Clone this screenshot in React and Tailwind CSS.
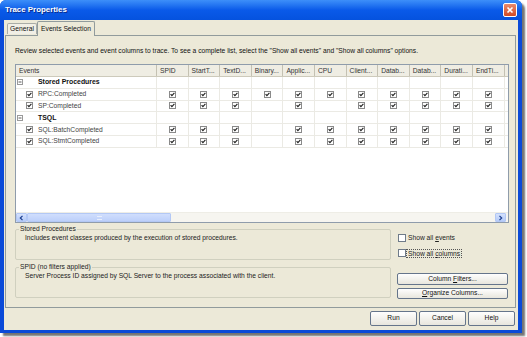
import React from 'react';

const COLS = ['SPID', 'StartT...', 'TextD...', 'Binary...', 'Applic...', 'CPU', 'Client...', 'Datab...', 'Datab...', 'Durati...', 'EndTi...'];

const ROWS = [
  { cat: true, label: 'Stored Procedures' },
  { label: 'RPC:Completed', c: [1, 1, 1, 1, 1, 1, 1, 1, 1, 1, 1] },
  { label: 'SP:Completed', c: [1, 1, 1, 0, 1, 0, 1, 1, 1, 1, 1] },
  { cat: true, label: 'TSQL' },
  { label: 'SQL:BatchCompleted', c: [1, 1, 1, 0, 1, 1, 1, 1, 1, 1, 1] },
  { label: 'SQL:StmtCompleted', c: [1, 1, 1, 0, 1, 1, 1, 1, 1, 1, 1] },
];

function Tick() {
  return (
    <svg width="7" height="7" viewBox="0 0 7 7">
      <rect x="0.5" y="0.5" width="6" height="6" fill="#fff" stroke="#8a8a8a" />
      <path d="M1.6 3.2 L2.9 4.7 L5.4 1.8" stroke="#222" strokeWidth="1.1" fill="none" />
    </svg>
  );
}

function Minus() {
  return (
    <svg width="6" height="6" viewBox="0 0 6 6">
      <rect x="0.5" y="0.5" width="5" height="5" fill="#fff" stroke="#9a9a9a" />
      <path d="M1.5 3 H4.5" stroke="#333" strokeWidth="0.8" />
    </svg>
  );
}

function Box() {
  return <div className="w-[8px] h-[8px] border border-[#6f7b89] bg-white shrink-0" />;
}

function Btn({ children, className }) {
  return (
    <div className={`flex items-center justify-center rounded-[2px] border border-[#65758b] bg-gradient-to-b from-[#fefefe] to-[#e8e6dd] text-[6.7px] text-[#111] ${className}`}>
      <span>{children}</span>
    </div>
  );
}

function Chevron({ dir }) {
  return (
    <svg width="5" height="6" viewBox="0 0 5 6">
      <path d={dir === 'l' ? 'M3.5 0.8 L1.3 3 L3.5 5.2' : 'M1.5 0.8 L3.7 3 L1.5 5.2'} stroke="#1d3f8f" strokeWidth="1.2" fill="none" />
    </svg>
  );
}

export default function App() {
  const gridCols = 'grid grid-cols-[141px_repeat(11,31.6px)_1fr]';
  return (
    <div className="w-[527px] h-[337px] bg-white font-['Liberation_Sans',Arial,sans-serif] text-[#111]">
      <div className="w-[522px] h-[333px] flex flex-col rounded-t-[6px] overflow-hidden bg-[#0a4ad8] shadow-[3px_3px_2px_rgba(0,0,0,0.55)]">
        {/* Title bar */}
        <div className="h-[20px] shrink-0 flex items-center justify-between pl-[5px] pr-[5px] bg-gradient-to-b from-[#3d8ff9] via-[#0a5ae9] to-[#0552de]">
          <span className="text-white font-bold text-[7.9px] [text-shadow:1px_1px_0_#0a2a8a]">Trace Properties</span>
          <div className="w-[14px] h-[14px] rounded-[2px] border border-white bg-gradient-to-b from-[#e98a6c] to-[#d24a22] flex items-center justify-center">
            <svg width="8" height="8" viewBox="0 0 8 8">
              <path d="M1.5 1.5 L6.5 6.5 M6.5 1.5 L1.5 6.5" stroke="#fff" strokeWidth="1.6" />
            </svg>
          </div>
        </div>

        {/* Body */}
        <div className="flex-1 mx-[4px] mb-[3px] bg-[#ece9d8] flex flex-col">
          {/* Tabs */}
          <div className="h-[15px] shrink-0 flex items-end pl-[3px] relative z-10">
            <div className="h-[11px] w-[30px] border border-b-0 border-[#a9aca6] rounded-t-[2px] bg-[#f1efe6] flex items-center justify-center text-[6.7px] mb-[1px]">
              General
            </div>
            <div className="h-[15px] w-[58px] border border-b-0 border-[#919b9c] rounded-t-[2px] bg-[#ece9d8] flex items-center justify-center text-[6.7px] -mb-[1px] whitespace-nowrap">
              Events Selection
            </div>
          </div>

          {/* Panel */}
          <div className="h-[273px] shrink-0 ml-[1px] mr-[2px] border border-[#919b9c] flex flex-col pl-[9px] pr-[6px]">
            <div className="mt-[11px] h-[8px] leading-[8px] text-[6.7px] whitespace-nowrap">
              Review selected events and event columns to trace. To see a complete list, select the "Show all events" and "Show all columns" options.
            </div>

            {/* Grid */}
            <div className="mt-[9px] h-[159px] border border-[#8f9cab] bg-white flex flex-col overflow-hidden">
              <div className={`${gridCols} h-[12px] shrink-0 bg-[#efede3] border-b border-[#cdcabb]`}>
                <div className="border-r border-[#c4c1b2] pl-[3px] text-[6.7px] leading-[11px] text-[#333]">Events</div>
                {COLS.map((c, i) => (
                  <div key={i} className="border-r border-[#c4c1b2] pl-[3px] text-[6.7px] leading-[11px] text-[#333] whitespace-nowrap overflow-hidden">
                    {c}
                  </div>
                ))}
                <div />
              </div>
              {ROWS.map((r, ri) => (
                <div key={ri} className={`${gridCols} h-[11.8px] shrink-0`}>
                  <div className="border-r border-b border-[#ebeae4] flex items-center">
                    {r.cat ? (
                      <>
                        <div className="ml-[1px] w-[21px] flex items-center"><Minus /></div>
                        <span className="font-bold text-[6.9px] text-[#111]">{r.label}</span>
                      </>
                    ) : (
                      <>
                        <div className="ml-[10px] w-[12px] flex items-center"><Tick /></div>
                        <span className="text-[6.7px] text-[#444]">{r.label}</span>
                      </>
                    )}
                  </div>
                  {COLS.map((_, ci) => (
                    <div key={ci} className="border-r border-b border-[#ebeae4] flex items-center justify-center">
                      {!r.cat && r.c[ci] ? <Tick /> : null}
                    </div>
                  ))}
                  <div className="border-b border-[#ebeae4]" />
                </div>
              ))}
              <div className="flex-1" />
              {/* Horizontal scrollbar */}
              <div className="h-[10px] shrink-0 flex bg-[#f6f5f0] border-t border-[#eeede6]">
                <div className="w-[11px] h-full rounded-[1px] border border-[#b3c8f5] bg-gradient-to-b from-[#d4e1fd] to-[#b5cbf8] flex items-center justify-center">
                  <Chevron dir="l" />
                </div>
                <div className="w-[144px] h-full rounded-[1px] border border-[#b3c8f5] bg-gradient-to-b from-[#d0defd] to-[#bdd0fa] flex items-center justify-center">
                  <div className="w-[5px] h-[4px] border-y border-[#e8eefc]" />
                </div>
                <div className="flex-1" />
                <div className="w-[11px] h-full rounded-[1px] border border-[#b3c8f5] bg-gradient-to-b from-[#d4e1fd] to-[#b5cbf8] flex items-center justify-center mr-[2px]">
                  <Chevron dir="r" />
                </div>
              </div>
            </div>

            {/* Lower area */}
            <div className="flex mt-[2px]">
              <div className="w-[376px] flex flex-col">
                <fieldset className="h-[35px] border border-[#d0d0bf] rounded-[2px] pl-[9px] pt-[1px]">
                  <legend className="text-[6.7px] ml-[-6px] px-[1px] leading-[8px] text-[#222]">Stored Procedures</legend>
                  <div className="text-[6.7px] leading-[8px] text-[#222]">Includes event classes produced by the execution of stored procedures.</div>
                </fieldset>
                <fieldset className="h-[35px] mt-[3px] border border-[#d0d0bf] rounded-[2px] pl-[9px] pt-[1px]">
                  <legend className="text-[6.7px] ml-[-6px] px-[1px] leading-[8px] text-[#222]">SPID (no filters applied)</legend>
                  <div className="text-[6.7px] leading-[8px] text-[#222]">Server Process ID assigned by SQL Server to the process associated with the client.</div>
                </fieldset>
              </div>
              <div className="ml-[6px] w-[111px] flex flex-col pt-[9px]">
                <div className="flex items-center gap-[2px] h-[8px] pl-[1px]">
                  <Box />
                  <span className="text-[6.7px] text-[#222]">Show all <span className="underline">e</span>vents</span>
                </div>
                <div className="flex items-center gap-[1px] h-[8px] mt-[7px] pl-[1px]">
                  <Box />
                  <span className="text-[6.7px] text-[#222] outline-1 outline-dotted outline-[#555] px-[1px] leading-[7px]">Show all <span className="underline">c</span>olumns</span>
                </div>
                <Btn className="h-[12px] mt-[16px]">Column <span className="underline">F</span>ilters...</Btn>
                <Btn className="h-[11px] mt-[3px]"><span className="underline">O</span>rganize Columns...</Btn>
              </div>
            </div>
          </div>

          {/* Bottom buttons */}
          <div className="flex justify-end gap-[2px] pr-[3px] mt-[3px]">
            <Btn className="w-[47px] h-[15px] border-[#3b4f73]">Run</Btn>
            <Btn className="w-[47px] h-[15px]">Cancel</Btn>
            <Btn className="w-[47px] h-[15px]">Help</Btn>
          </div>
        </div>
      </div>
    </div>
  );
}
